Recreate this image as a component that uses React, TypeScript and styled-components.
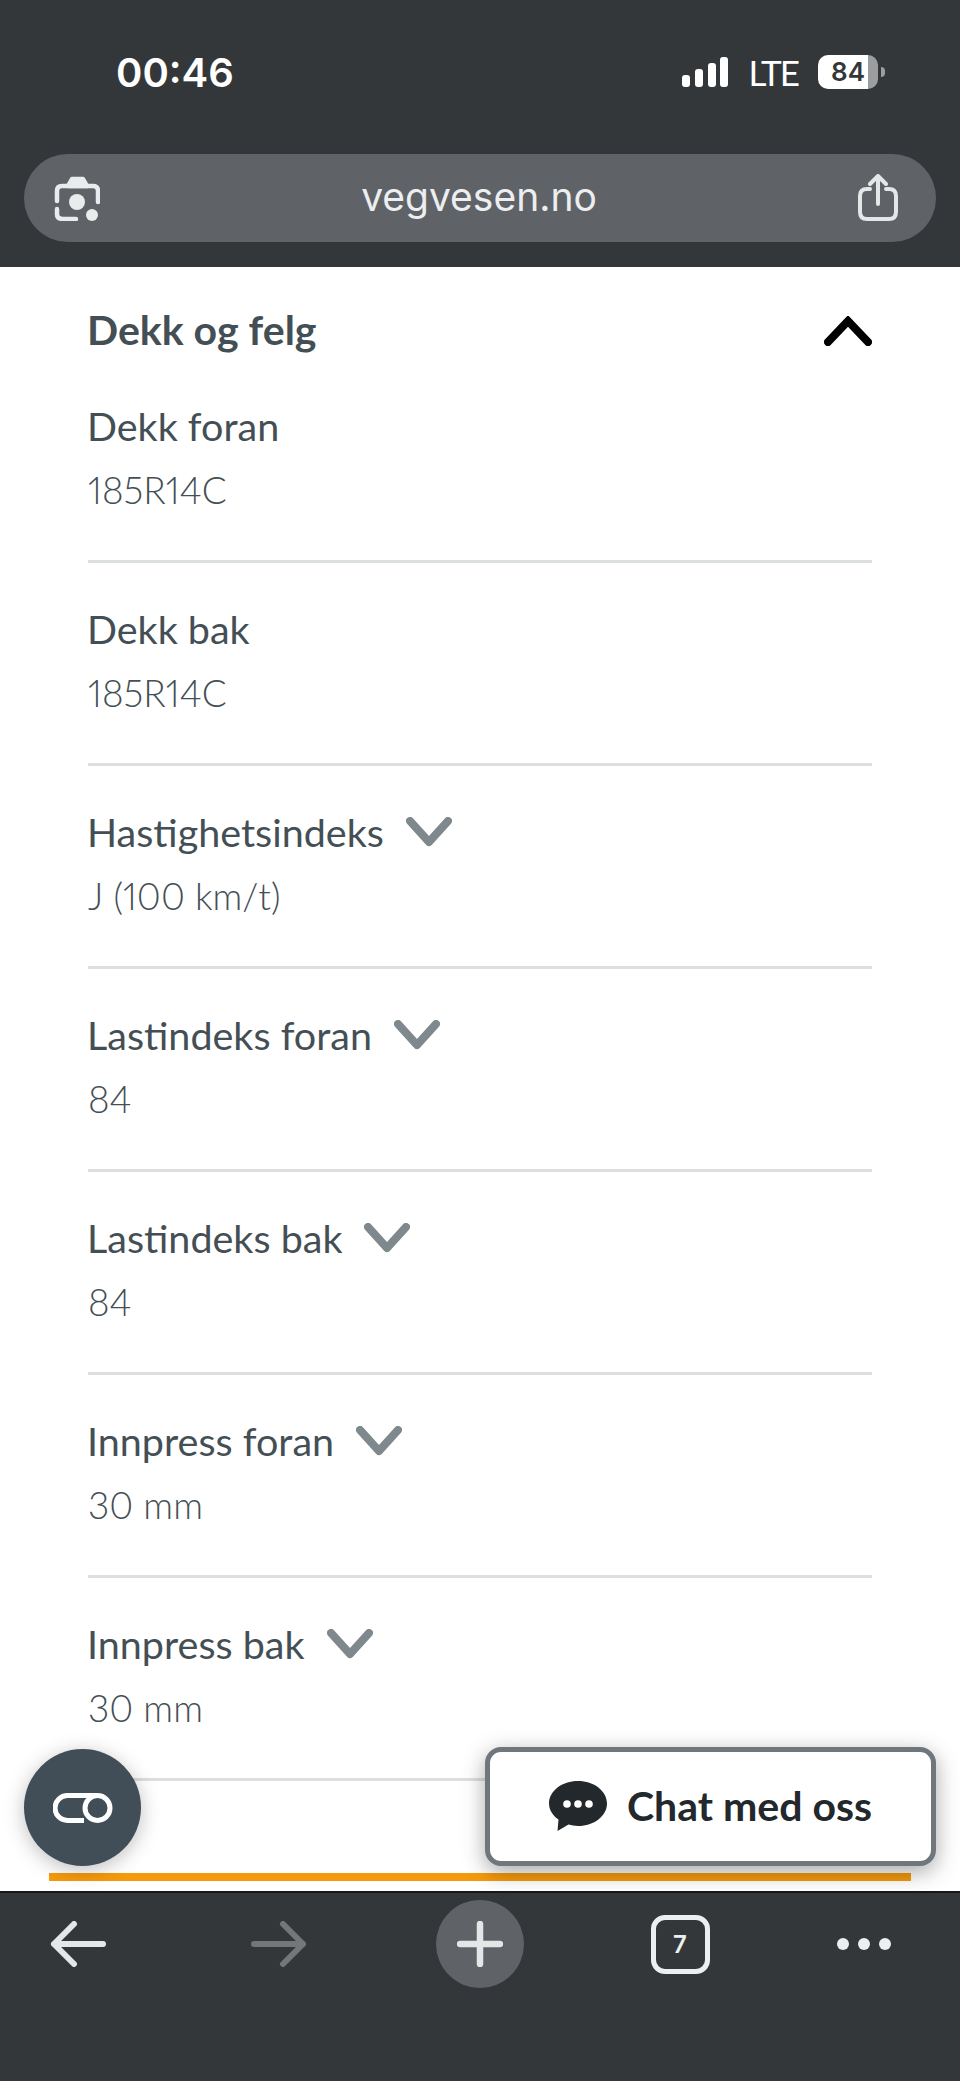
import React from 'react';
import styled, { createGlobalStyle } from 'styled-components';

const GlobalStyle = createGlobalStyle`
  html, body {
    margin: 0;
    padding: 0;
    background: #fff;
  }
`;

const Page = styled.div`
  position: relative;
  width: 960px;
  height: 2081px;
  overflow: hidden;
  display: flex;
  flex-direction: column;
  font-family: Lato, 'Open Sans', sans-serif;
`;

const TopBar = styled.header`
  height: 267px;
  flex: none;
  box-sizing: border-box;
  background: #34373a;
  padding: 48px 24px 0;
`;

const StatusRow = styled.div`
  height: 48px;
  display: flex;
  align-items: center;
  justify-content: space-between;
  padding: 0 58px 0 92px;
`;

const Clock = styled.span`
  font-family: Inter, sans-serif;
  font-weight: 600;
  font-size: 40px;
  color: #fff;
`;

const StatusIcons = styled.div`
  display: flex;
  align-items: center;
`;

const Lte = styled.span`
  margin: 0 20px;
  font-weight: 400;
  font-size: 35px;
  letter-spacing: -2px;
  color: #fff;
`;

const Battery = styled.div`
  position: relative;
  width: 60px;
  height: 34px;
  border-radius: 10px;
  background: linear-gradient(90deg, #fff 83%, #9b9d9f 83%);
  color: #34373a;
  font-family: Inter, sans-serif;
  font-weight: 600;
  font-size: 26px;
  line-height: 34px;
  text-align: center;
  &:after {
    content: '';
    position: absolute;
    right: -7px;
    top: 12px;
    width: 4px;
    height: 10px;
    border-radius: 0 5px 5px 0;
    background: #9b9d9f;
  }
`;

const UrlBar = styled.div`
  margin-top: 58px;
  height: 88px;
  width: 912px;
  border-radius: 44px;
  background: #5f6367;
  display: flex;
  align-items: center;
  justify-content: space-between;
  padding: 0 38px 0 30px;
  box-sizing: border-box;
`;

const UrlText = styled.span`
  font-family: Inter, sans-serif;
  font-size: 39px;
  line-height: 44px;
  margin-top: -3px;
  color: #eceeef;
`;

const Content = styled.main`
  flex: 1;
  display: flex;
  flex-direction: column;
  padding: 0 88px;
`;

const AccordionHeader = styled.div`
  height: 93px;
  flex: none;
  box-sizing: border-box;
  padding-top: 41px;
  display: flex;
  align-items: flex-start;
  justify-content: space-between;
`;

const Heading = styled.h2`
  margin: 0 0 0 -1px;
  font-size: 41px;
  line-height: 44px;
  font-weight: 700;
  color: #444f55;
`;

const CollapseIcon = styled.svg`
  margin-top: 8px;
`;

const Row = styled.div`
  height: 203px;
  flex: none;
  box-sizing: border-box;
  padding-top: 44px;
  border-bottom: 3px solid #dcdfe0;
`;

const Label = styled.div`
  display: flex;
  align-items: center;
  gap: 22px;
  margin-left: -1px;
  font-size: 39.5px;
  line-height: 44px;
  color: #444f55;
`;

const Value = styled.div`
  margin-top: 20px;
  font-size: 37px;
  line-height: 44px;
  font-weight: 300;
  font-variant-numeric: proportional-nums;
  color: #444f55;
`;

const ProgressLine = styled.div`
  margin: auto -39px 10px;
  height: 8px;
  background: #f59a0c;
`;

const BottomBar = styled.nav`
  height: 190px;
  flex: none;
  box-sizing: border-box;
  background: #34373a;
  border-top: 2px solid #16181a;
  display: grid;
  grid-template-columns: 156px 246px 156px 244px 124px;
  justify-items: center;
  align-items: start;
  padding-top: 20px;
`;

const BottomIcon = styled.div`
  height: 62px;
  display: flex;
  align-items: center;
`;

const PlusCircle = styled.div`
  width: 88px;
  height: 88px;
  margin-top: -13px;
  border-radius: 50%;
  background: #5f6367;
  display: flex;
  align-items: center;
  justify-content: center;
`;

const TabCount = styled.div`
  width: 59px;
  height: 59px;
  box-sizing: border-box;
  border: 5px solid #eceeef;
  border-radius: 14px;
  color: #eceeef;
  font-family: Inter, sans-serif;
  font-weight: 600;
  font-size: 24px;
  display: flex;
  align-items: center;
  justify-content: center;
`;

const Dots = styled.div`
  display: flex;
  gap: 9px;
`;

const Dot = styled.span`
  width: 12px;
  height: 12px;
  border-radius: 50%;
  background: #eceeef;
`;

const A11yButton = styled.div`
  position: absolute;
  left: 24px;
  top: 1749px;
  width: 117px;
  height: 117px;
  border-radius: 50%;
  background: #414e57;
  box-shadow: 0 4px 20px rgba(0, 0, 0, 0.25);
  display: flex;
  align-items: center;
  justify-content: center;
`;

const ChatButton = styled.div`
  position: absolute;
  left: 485px;
  top: 1747px;
  width: 451px;
  height: 119px;
  box-sizing: border-box;
  border: 5px solid #6f777d;
  border-radius: 16px;
  background: #fff;
  box-shadow: 0 6px 22px rgba(0, 0, 0, 0.35);
  display: flex;
  align-items: center;
  justify-content: center;
  gap: 20px;
  padding-bottom: 2px;
  font-size: 41px;
  font-weight: 700;
  color: #22282c;
`;

type Item = { label: string; value: string; info?: boolean };

const rows: Item[] = [
  { label: 'Dekk foran', value: '185R14C' },
  { label: 'Dekk bak', value: '185R14C' },
  { label: 'Hastighetsindeks', value: 'J (100 km/t)', info: true },
  { label: 'Lastindeks foran', value: '84', info: true },
  { label: 'Lastindeks bak', value: '84', info: true },
  { label: 'Innpress foran', value: '30 mm', info: true },
  { label: 'Innpress bak', value: '30 mm', info: true },
];

const Chevron = () => (
  <svg width="46" height="30" viewBox="0 0 46 30" fill="none">
    <path d="M4 4 L23 25 L42 4" stroke="#7f888c" strokeWidth="8" strokeLinecap="round" strokeLinejoin="round" />
  </svg>
);

const Signal = () => (
  <svg width="46" height="30" viewBox="0 0 46 30" fill="#fff">
    <rect x="0" y="18" width="8" height="12" rx="3" />
    <rect x="13" y="12" width="8" height="18" rx="3" />
    <rect x="26" y="6" width="8" height="24" rx="3" />
    <rect x="38" y="0" width="8" height="30" rx="3" />
  </svg>
);

const LensIcon = () => (
  <svg width="46" height="46" viewBox="0 0 46 46" fill="none" stroke="#e9ebec" strokeWidth="4.5" strokeLinecap="round" strokeLinejoin="round">
    <path d="M3 26 V16 Q3 11 8 11 H39 Q44 11 44 16 V27" />
    <path d="M14 11 L18 4 H29 L33 11 Z" fill="#e9ebec" />
    <path d="M3 34 V39 Q3 44 9 44 H22" />
    <circle cx="23" cy="27" r="8" fill="#e9ebec" stroke="none" />
    <circle cx="38" cy="40" r="6" fill="#e9ebec" stroke="none" />
  </svg>
);

const ShareIcon = () => (
  <svg width="40" height="48" viewBox="0 0 40 48" fill="none" stroke="#e4e6e7" strokeWidth="4" strokeLinecap="round" strokeLinejoin="round">
    <path d="M12 15 H9 Q2 15 2 22 V38 Q2 45 9 45 H31 Q38 45 38 38 V22 Q38 15 31 15 H28" />
    <path d="M20 30 V3 M12 10 L20 2 L28 10" />
  </svg>
);

const ArrowIcon = ({ flip, color }: { flip?: boolean; color: string }) => (
  <svg width="56" height="46" viewBox="0 0 56 46" fill="none" stroke={color} strokeWidth="6" strokeLinecap="round" strokeLinejoin="round" transform={flip ? 'scale(-1 1)' : undefined}>
    <path d="M4 23 H53 M24 3 L4 23 L24 43" />
  </svg>
);

const PlusIcon = () => (
  <svg width="46" height="46" viewBox="0 0 46 46" stroke="#e4e6e7" strokeWidth="6.5" strokeLinecap="round">
    <path d="M23 3 V43 M3 23 H43" />
  </svg>
);

const ToggleIcon = () => (
  <svg width="60" height="30" viewBox="0 0 60 30" fill="none" stroke="#fff" strokeWidth="5">
    <path d="M44 2.5 H14.5 A12.5 12.5 0 0 0 14.5 27.5 H31" />
    <circle cx="44.5" cy="15" r="12.5" />
  </svg>
);

const ChatIcon = () => (
  <svg width="58" height="50" viewBox="0 0 58 50">
    <path d="M29 0 C45 0 58 10 58 22.5 C58 35 45 45 29 45 C25.5 45 22.5 44.5 19.5 43.6 L8.5 50 L9.5 38.6 C3.6 34.5 0 28.8 0 22.5 C0 10 13 0 29 0 Z" fill="#22282c" />
    <circle cx="18" cy="23" r="3.8" fill="#fff" />
    <circle cx="29" cy="23" r="3.8" fill="#fff" />
    <circle cx="40" cy="23" r="3.8" fill="#fff" />
  </svg>
);

export default function App() {
  return (
    <Page>
      <GlobalStyle />
      <TopBar>
        <StatusRow>
          <Clock>00:46</Clock>
          <StatusIcons>
            <Signal />
            <Lte>LTE</Lte>
            <Battery>84</Battery>
          </StatusIcons>
        </StatusRow>
        <UrlBar>
          <LensIcon />
          <UrlText>vegvesen.no</UrlText>
          <ShareIcon />
        </UrlBar>
      </TopBar>
      <Content>
        <AccordionHeader>
          <Heading>Dekk og felg</Heading>
          <CollapseIcon width="48" height="30" viewBox="0 0 48 30" fill="none">
            <path d="M4 26 L24 5 L44 26" stroke="#000" strokeWidth="8" strokeLinecap="round" />
          </CollapseIcon>
        </AccordionHeader>
        {rows.map((row) => (
          <Row key={row.label}>
            <Label>
              {row.label}
              {row.info && <Chevron />}
            </Label>
            <Value>{row.value}</Value>
          </Row>
        ))}
        <ProgressLine />
      </Content>
      <BottomBar>
        <BottomIcon>
          <ArrowIcon color="#e4e6e7" />
        </BottomIcon>
        <BottomIcon>
          <ArrowIcon flip color="#74777a" />
        </BottomIcon>
        <PlusCircle>
          <PlusIcon />
        </PlusCircle>
        <BottomIcon>
          <TabCount>7</TabCount>
        </BottomIcon>
        <BottomIcon>
          <Dots>
            <Dot />
            <Dot />
            <Dot />
          </Dots>
        </BottomIcon>
      </BottomBar>
      <A11yButton>
        <ToggleIcon />
      </A11yButton>
      <ChatButton>
        <ChatIcon />
        Chat med oss
      </ChatButton>
    </Page>
  );
}
